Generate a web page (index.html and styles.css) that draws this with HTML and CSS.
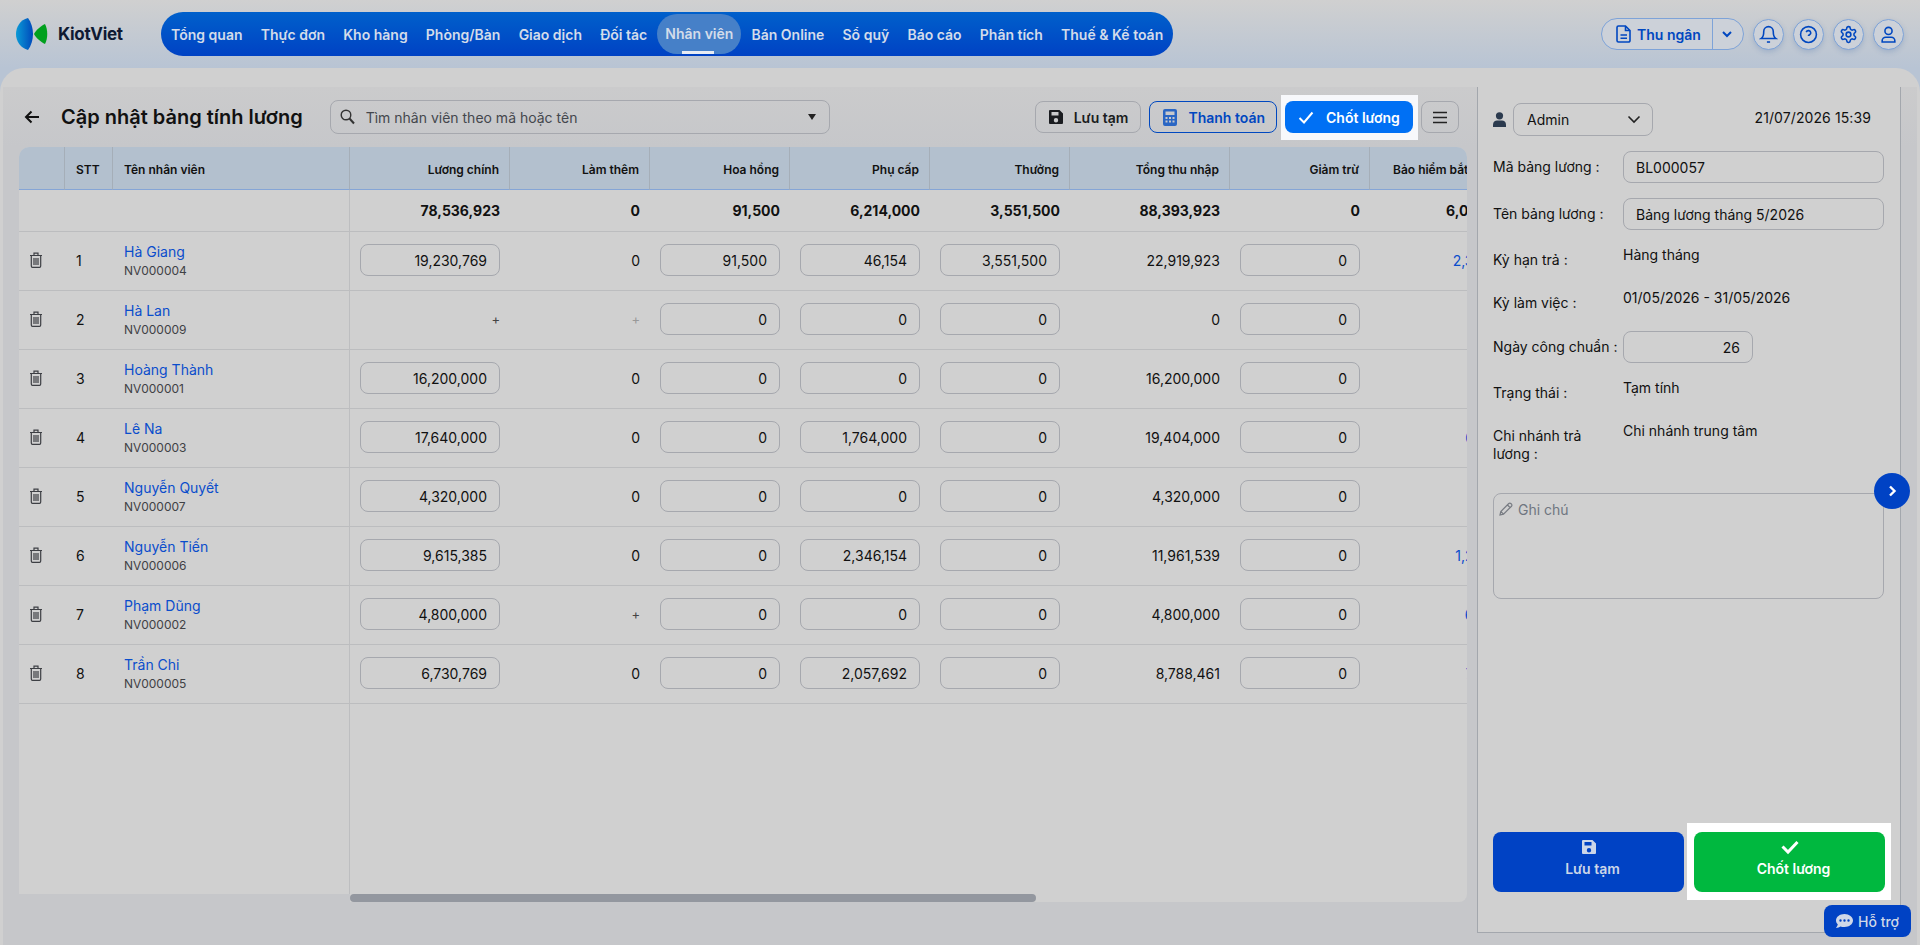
FILE: index.html
```html
<!DOCTYPE html>
<html lang="vi">
<head>
    <meta charset="UTF-8">
    <meta name="viewport" content="width=device-width, initial-scale=1.0">
    <title>Cập nhật bảng tính lương</title>
    <link rel="stylesheet" href="styles.css">
</head>
<body>
    <svg class="sprite" width="0" height="0">
        <symbol id="trash" viewBox="0 0 14 16">
            <path d="M1 3.5h12M5 3.5V1.2h4v2.3M2.3 3.5v10.6c0 .8.5 1.3 1.2 1.3h7c.7 0 1.2-.5 1.2-1.3V3.5M5 6v7M7 6v7M9 6v7" fill="none" stroke="#3d3f44" stroke-width="1.2"/>
        </symbol>
        <symbol id="floppy" viewBox="0 0 16 16">
            <path d="M2 1h9.5L15 4.5V14a1 1 0 0 1-1 1H2a1 1 0 0 1-1-1V2a1 1 0 0 1 1-1zm1.5 2v3.5h7V3zM8 9a2.2 2.2 0 1 0 0 4.4A2.2 2.2 0 0 0 8 9z" fill="currentColor" fill-rule="evenodd"/>
        </symbol>
    </svg>

    <header class="topbar">
        <div class="logo">
            <svg width="32" height="32" viewBox="0 0 32 32">
                <defs>
                    <linearGradient id="logoblue" x1="0" x2="1" y1="0" y2="0">
                        <stop offset="0" stop-color="#0a9ad6"/>
                        <stop offset="1" stop-color="#0049bb"/>
                    </linearGradient>
                </defs>
                <path d="M12 0C4 2 0 9 0 16c0 8 5 14 12 16 3-4 5-10 5-16S15 4 12 0z" fill="url(#logoblue)"/>
                <path d="M18 16c2-4 7-8 11-10 3 6 3 14 0 20-4-2-9-6-11-10z" fill="#00a01e"/>
            </svg>
            <span class="logo_text">KiotViet</span>
        </div>
        <nav class="menu">
            <a>Tổng quan</a>
            <a>Thực đơn</a>
            <a>Kho hàng</a>
            <a>Phòng/Bàn</a>
            <a>Giao dịch</a>
            <a>Đối tác</a>
            <a class="active">Nhân viên</a>
            <a>Bán Online</a>
            <a>Sổ quỹ</a>
            <a>Báo cáo</a>
            <a>Phân tích</a>
            <a>Thuế &amp; Kế toán</a>
        </nav>
        <div class="tools">
            <div class="cashier">
                <span class="cashier_main">
                    <svg width="16" height="18" viewBox="0 0 16 18" fill="none" stroke="currentColor" stroke-width="1.6"><path d="M2.5 1h7L14 5.5V15.5a1.5 1.5 0 0 1-1.5 1.5h-10A1.5 1.5 0 0 1 1 15.5v-13A1.5 1.5 0 0 1 2.5 1zM9.5 1v4.5H14M4.5 10h6.5M4.5 13.2h6.5"/></svg>
                    Thu ngân
                </span>
                <span class="cashier_arrow">
                    <svg width="12" height="8" viewBox="0 0 12 8" fill="none" stroke="currentColor" stroke-width="2"><path d="M2 2l4 4 4-4"/></svg>
                </span>
            </div>
            <span class="round_btn">
                <svg width="19" height="19" viewBox="0 0 24 24" fill="none" stroke="currentColor" stroke-width="2"><path d="M6 8a6 6 0 0 1 12 0c0 7 3 9 3 9H3s3-2 3-9"/><path d="M10 21.5h4"/></svg>
            </span>
            <span class="round_btn">
                <svg width="19" height="19" viewBox="0 0 24 24" fill="none" stroke="currentColor" stroke-width="2"><circle cx="12" cy="12" r="10"/><path d="M9.1 9a3 3 0 0 1 5.8 1c0 2-3 2.5-3 4"/><path d="M12 17.5h.01"/></svg>
            </span>
            <span class="round_btn">
                <svg width="19" height="19" viewBox="0 0 24 24" fill="none" stroke="currentColor" stroke-width="2"><path d="M12.22 2h-.44a2 2 0 0 0-2 2v.18a2 2 0 0 1-1 1.73l-.43.25a2 2 0 0 1-2 0l-.15-.08a2 2 0 0 0-2.73.73l-.22.38a2 2 0 0 0 .73 2.73l.15.1a2 2 0 0 1 1 1.72v.51a2 2 0 0 1-1 1.74l-.15.09a2 2 0 0 0-.73 2.73l.22.38a2 2 0 0 0 2.73.73l.15-.08a2 2 0 0 1 2 0l.43.25a2 2 0 0 1 1 1.73V20a2 2 0 0 0 2 2h.44a2 2 0 0 0 2-2v-.18a2 2 0 0 1 1-1.73l.43-.25a2 2 0 0 1 2 0l.15.08a2 2 0 0 0 2.73-.73l.22-.39a2 2 0 0 0-.73-2.73l-.15-.08a2 2 0 0 1-1-1.74v-.5a2 2 0 0 1 1-1.74l.15-.09a2 2 0 0 0 .73-2.73l-.22-.38a2 2 0 0 0-2.73-.73l-.15.08a2 2 0 0 1-2 0l-.43-.25a2 2 0 0 1-1-1.73V4a2 2 0 0 0-2-2z"/><circle cx="12" cy="12" r="3"/></svg>
            </span>
            <span class="round_btn">
                <svg width="19" height="19" viewBox="0 0 24 24" fill="none" stroke="currentColor" stroke-width="2"><circle cx="12" cy="7.5" r="4.5"/><path d="M4 21.5v-1.5a4.5 4.5 0 0 1 4.5-4.5h7a4.5 4.5 0 0 1 4.5 4.5v1.5z"/></svg>
            </span>
        </div>
    </header>

    <main class="panel">
        <div class="panel_inner">
            <section class="left">
                <div class="title_row">
                    <svg class="back" width="15" height="14" viewBox="0 0 15 14" fill="none" stroke="#111" stroke-width="2"><path d="M15 7H2M7.5 1.5L2 7l5.500 5.500"/></svg>
                    <h1>Cập nhật bảng tính lương</h1>
                    <div class="search">
                        <svg width="15" height="16" viewBox="0 0 15 16" fill="none" stroke="#333" stroke-width="1.4"><circle cx="6" cy="6" r="4.8"/><path d="M9.5 9.5l4.5 5" stroke-width="2"/></svg>
                        <span class="search_text">Tìm nhân viên theo mã hoặc tên</span>
                        <span class="search_caret"></span>
                    </div>
                    <div class="actions">
                        <button class="btn"><svg width="16" height="16"><use href="#floppy"/></svg>Lưu tạm</button>
                        <button class="btn btn_outline">
                            <svg width="14" height="17" viewBox="0 0 14 17"><path d="M2 0h10a2 2 0 0 1 2 2v13a2 2 0 0 1-2 2H2a2 2 0 0 1-2-2V2a2 2 0 0 1 2-2zm.5 2.500v3.500h9V2.500zM2.500 8v2h2V8zm3.500 0v2h2V8zm3.500 0v2h2V8zm-7 3.500v2h2v-2zm3.500 0v2h2v-2zm3.500 0v2h2v-2z" fill="#2a66c4" fill-rule="evenodd"/></svg>
                            Thanh toán
                        </button>
                        <div class="spot">
                            <button class="btn btn_primary">
                                <svg width="16" height="13" viewBox="0 0 16 13" fill="none" stroke="#fff" stroke-width="2"><path d="M1.500 7l4.500 4.500 8.500-10"/></svg>
                                Chốt lương
                            </button>
                        </div>
                        <button class="btn btn_icon">
                            <svg width="16" height="13" viewBox="0 0 16 13" fill="none" stroke="#222" stroke-width="1.7"><path d="M1 1.500h14M1 6.500h14M1 11.500h14"/></svg>
                        </button>
                    </div>
                </div>

                <div class="table_wrap">
                    <table class="grid">
                        <colgroup>
                            <col class="w46"><col class="w48"><col class="w237">
                            <col class="w160"><col class="w140"><col class="w140"><col class="w140"><col class="w140">
                            <col class="w160"><col class="w140"><col class="w156">
                        </colgroup>
                        <thead>
                            <tr>
                                <th></th>
                                <th class="left_text">STT</th>
                                <th class="left_text frozen">Tên nhân viên</th>
                                <th>Lương chính</th>
                                <th>Làm thêm</th>
                                <th>Hoa hồng</th>
                                <th>Phụ cấp</th>
                                <th>Thưởng</th>
                                <th>Tổng thu nhập</th>
                                <th>Giảm trừ</th>
                                <th class="last">Bảo hiểm bắt buộc</th>
                            </tr>
                        </thead>
                        <tbody>
                            <tr class="total">
                                <td></td><td></td><td class="frozen"></td>
                                <td>78,536,923</td><td>0</td><td>91,500</td><td>6,214,000</td><td>3,551,500</td><td>88,393,923</td><td>0</td><td>6,014,000</td>
                            </tr>
                            <tr>
                                <td class="del"><svg width="14" height="16"><use href="#trash"/></svg></td>
                                <td class="stt">1</td>
                                <td class="frozen"><a class="name">Hà Giang</a><span class="code">NV000004</span></td>
                                <td><input class="num" value="19,230,769"></td><td>0</td>
                                <td><input class="num" value="91,500"></td><td><input class="num" value="46,154"></td><td><input class="num" value="3,551,500"></td>
                                <td>22,919,923</td><td><input class="num" value="0"></td><td class="link">2,300,000</td>
                            </tr>
                            <tr>
                                <td class="del"><svg width="14" height="16"><use href="#trash"/></svg></td>
                                <td class="stt">2</td>
                                <td class="frozen"><a class="name">Hà Lan</a><span class="code">NV000009</span></td>
                                <td class="plus">+</td><td class="plus muted">+</td>
                                <td><input class="num" value="0"></td><td><input class="num" value="0"></td><td><input class="num" value="0"></td>
                                <td>0</td><td><input class="num" value="0"></td><td class="link">0</td>
                            </tr>
                            <tr>
                                <td class="del"><svg width="14" height="16"><use href="#trash"/></svg></td>
                                <td class="stt">3</td>
                                <td class="frozen"><a class="name">Hoàng Thành</a><span class="code">NV000001</span></td>
                                <td><input class="num" value="16,200,000"></td><td>0</td>
                                <td><input class="num" value="0"></td><td><input class="num" value="0"></td><td><input class="num" value="0"></td>
                                <td>16,200,000</td><td><input class="num" value="0"></td><td class="link">0</td>
                            </tr>
                            <tr>
                                <td class="del"><svg width="14" height="16"><use href="#trash"/></svg></td>
                                <td class="stt">4</td>
                                <td class="frozen"><a class="name">Lê Na</a><span class="code">NV000003</span></td>
                                <td><input class="num" value="17,640,000"></td><td>0</td>
                                <td><input class="num" value="0"></td><td><input class="num" value="1,764,000"></td><td><input class="num" value="0"></td>
                                <td>19,404,000</td><td><input class="num" value="0"></td><td class="link">650,000</td>
                            </tr>
                            <tr>
                                <td class="del"><svg width="14" height="16"><use href="#trash"/></svg></td>
                                <td class="stt">5</td>
                                <td class="frozen"><a class="name">Nguyễn Quyết</a><span class="code">NV000007</span></td>
                                <td><input class="num" value="4,320,000"></td><td>0</td>
                                <td><input class="num" value="0"></td><td><input class="num" value="0"></td><td><input class="num" value="0"></td>
                                <td>4,320,000</td><td><input class="num" value="0"></td><td class="link">0</td>
                            </tr>
                            <tr>
                                <td class="del"><svg width="14" height="16"><use href="#trash"/></svg></td>
                                <td class="stt">6</td>
                                <td class="frozen"><a class="name">Nguyễn Tiến</a><span class="code">NV000006</span></td>
                                <td><input class="num" value="9,615,385"></td><td>0</td>
                                <td><input class="num" value="0"></td><td><input class="num" value="2,346,154"></td><td><input class="num" value="0"></td>
                                <td>11,961,539</td><td><input class="num" value="0"></td><td class="link">1,200,000</td>
                            </tr>
                            <tr>
                                <td class="del"><svg width="14" height="16"><use href="#trash"/></svg></td>
                                <td class="stt">7</td>
                                <td class="frozen"><a class="name">Phạm Dũng</a><span class="code">NV000002</span></td>
                                <td><input class="num" value="4,800,000"></td><td class="plus">+</td>
                                <td><input class="num" value="0"></td><td><input class="num" value="0"></td><td><input class="num" value="0"></td>
                                <td>4,800,000</td><td><input class="num" value="0"></td><td class="link">600,000</td>
                            </tr>
                            <tr>
                                <td class="del"><svg width="14" height="16"><use href="#trash"/></svg></td>
                                <td class="stt">8</td>
                                <td class="frozen"><a class="name">Trần Chi</a><span class="code">NV000005</span></td>
                                <td><input class="num" value="6,730,769"></td><td>0</td>
                                <td><input class="num" value="0"></td><td><input class="num" value="2,057,692"></td><td><input class="num" value="0"></td>
                                <td>8,788,461</td><td><input class="num" value="0"></td><td class="link">700,000</td>
                            </tr>
                        </tbody>
                    </table>
                </div>
                <div class="scroll_track"><div class="scroll_thumb"></div></div>
            </section>

            <aside class="side">
                <div class="side_head">
                    <svg width="13" height="15" viewBox="0 0 13 15" fill="#2b3a4e"><circle cx="6.500" cy="3.800" r="3.600"/><path d="M0 15v-2.500C0 10 2 8.500 4 8.500h5c2 0 4 1.500 4 4V15z"/></svg>
                    <div class="user_select">Admin
                        <svg width="14" height="9" viewBox="0 0 14 9" fill="none" stroke="#222" stroke-width="1.600"><path d="M1.500 1.500L7 7l5.500-5.500"/></svg>
                    </div>
                    <span class="date">21/07/2026 15:39</span>
                </div>

                <div class="form">
                    <label>Mã bảng lương :</label>
                    <input class="field" value="BL000057">
                    <label>Tên bảng lương :</label>
                    <input class="field" value="Bảng lương tháng 5/2026">
                    <label class="top">Kỳ hạn trả :</label>
                    <span class="value">Hàng tháng</span>
                    <label class="top">Kỳ làm việc :</label>
                    <span class="value">01/05/2026 - 31/05/2026</span>
                    <label>Ngày công chuẩn :</label>
                    <input class="field field_short" value="26">
                    <label class="top">Trạng thái :</label>
                    <span class="value">Tạm tính</span>
                    <label class="top">Chi nhánh trả lương :</label>
                    <span class="value">Chi nhánh trung tâm</span>
                </div>

                <div class="note">
                    <svg width="14" height="14" viewBox="0 0 14 14" fill="none" stroke="#777b82" stroke-width="1.200"><path d="M1 13l.8-3.500L9.800 1.500a1.400 1.400 0 0 1 2 0l.7.700a1.400 1.400 0 0 1 0 2L4.500 12.200zM8.500 3l2.500 2.500M1.800 9.500l2.700 2.700"/></svg>
                    Ghi chú
                </div>

                <span class="collapse">
                    <svg width="9" height="12" viewBox="0 0 9 12" fill="none" stroke="#fff" stroke-width="2.400"><path d="M2 1.500L6.500 6 2 10.500"/></svg>
                </span>

                <div class="side_btns">
                    <button class="big_btn big_blue">
                        <svg width="16" height="16"><use href="#floppy"/></svg>
                        <span class="big_text">Lưu tạm</span>
                    </button>
                    <div class="spot_big">
                        <button class="big_btn big_green">
                            <svg width="18" height="16" viewBox="0 0 18 16" fill="none" stroke="#fff" stroke-width="3"><path d="M1.500 7.500L7 13 16.500 3"/></svg>
                            <span class="big_text">Chốt lương</span>
                        </button>
                    </div>
                </div>
            </aside>
        </div>
    </main>

    <button class="support">
        <svg width="17" height="15" viewBox="0 0 17 15"><path d="M8.500 0C3.800 0 0 2.900 0 6.500c0 1.500.7 2.900 1.800 4C1.400 12 .5 13.300 0 14c1.800 0 3.400-.8 4.400-1.500 1.200.4 2.600.6 4.100.6 4.700 0 8.500-2.900 8.500-6.500S13.200 0 8.500 0zM4.500 5.300a1.200 1.200 0 1 1 0 2.400 1.200 1.200 0 0 1 0-2.400zm4 0a1.200 1.200 0 1 1 0 2.400 1.200 1.200 0 0 1 0-2.400zm4 0a1.200 1.200 0 1 1 0 2.400 1.200 1.200 0 0 1 0-2.400z" fill="#cfd8e8" fill-rule="evenodd"/></svg>
        Hỗ trợ
    </button>
</body>
</html>
```

FILE: styles.css
```css
* {
    margin: 0;
    padding: 0;
    box-sizing: border-box;
}
body {
    width: 1920px;
    height: 945px;
    overflow: hidden;
    background: linear-gradient(#d0d0d0 0, #b8c4d4 68px, #b8c4d4 100%);
    font-family: Inter, "Noto Sans", sans-serif;
    font-size: 14px;
    color: #111;
    display: flex;
    flex-direction: column;
}
.sprite {
    position: absolute;
}
input, button {
    font-family: inherit;
    font-size: 14px;
}

/* Top bar */
.topbar {
    height: 68px;
    flex: none;
    display: flex;
    align-items: center;
    padding: 0 16px;
}
.logo {
    width: 145px;
    display: flex;
    align-items: center;
    gap: 10px;
}
.logo_text {
    font-size: 17px;
    font-weight: 700;
    color: #0f1a33;
    letter-spacing: -0.3px;
}
.menu {
    height: 44px;
    display: flex;
    align-items: center;
    padding: 0 1px;
    border-radius: 22px;
    background: linear-gradient(#0060cb, #0042c4);
}
.menu a {
    padding: 0 9.1px;
    font-weight: 600;
    color: #d3dcea;
    white-space: nowrap;
}
.menu a.active {
    position: relative;
    height: 40px;
    line-height: 40px;
    padding: 0 8px;
    margin: 0 1px;
    border-radius: 20px;
    background: #4680c8;
}
.menu a.active::after {
    content: "";
    position: absolute;
    left: 25px;
    bottom: 0;
    width: 32px;
    height: 3px;
    background: #e8ecf3;
}
.tools {
    margin-left: auto;
    display: flex;
    align-items: center;
    gap: 9px;
}
.cashier {
    width: 143px;
    height: 32px;
    display: flex;
    border: 1px solid #7ea3d8;
    border-radius: 16px;
    background: #ccd1d9;
    color: #0047c0;
    font-weight: 600;
}
.cashier_main {
    width: 111px;
    display: flex;
    align-items: center;
    gap: 5px;
    padding-left: 14px;
    border-right: 1px solid #7ea3d8;
}
.cashier_arrow {
    flex: 1;
    display: flex;
    align-items: center;
    justify-content: center;
    padding-right: 2px;
}
.round_btn {
    width: 31px;
    height: 31px;
    display: flex;
    align-items: center;
    justify-content: center;
    border: 1px solid #7ea3d8;
    border-radius: 50%;
    background: #ccd1d9;
    color: #0047c0;
    box-shadow: 0 2px 5px rgba(70, 110, 170, .25);
}

/* Main panel */
.panel {
    flex: 1;
    display: flex;
    padding: 19px 3px 0;
    border-radius: 24px 24px 0 0;
    background: #d0d0d0;
    min-height: 0;
}
.panel_inner {
    flex: 1;
    display: flex;
    gap: 10px;
    padding: 0 16px 12px 16px;
    background: linear-gradient(#cbcbcc, #c6c7ca 60px);
}
.left {
    width: 1448px;
    flex: none;
    display: flex;
    flex-direction: column;
    padding-bottom: 31px;
}
.title_row {
    height: 60px;
    flex: none;
    display: flex;
    align-items: center;
    padding-right: 8px;
}
.back {
    margin-left: 5px;
}
h1 {
    margin-left: 22px;
    font-size: 20px;
    font-weight: 600;
    white-space: nowrap;
}
.search {
    width: 500px;
    height: 34px;
    margin-left: 27px;
    display: flex;
    align-items: center;
    padding: 0 13px 0 9px;
    border: 1px solid #a6a8ae;
    border-radius: 8px;
}
.search_text {
    margin-left: 11px;
    color: #44474d;
}
.search_caret {
    margin-left: auto;
    border-left: 4px solid transparent;
    border-right: 4px solid transparent;
    border-top: 6px solid #222;
}
.actions {
    margin-left: auto;
    display: flex;
    gap: 8px;
}
.btn {
    height: 32px;
    display: flex;
    align-items: center;
    gap: 10px;
    padding: 0 12px;
    border: 1px solid #a6a8ae;
    border-radius: 8px;
    background: transparent;
    color: #1a1c20;
    font-weight: 600;
}
.btn_outline {
    border-color: #0048c0;
    color: #0047c0;
    padding: 0 11px 0 13px;
    gap: 11px;
}
.spot {
    padding: 6px 5px 7px 4px;
    margin: -6px -5px -7px -4px;
    background: #f7f8fb;
}
.btn_primary {
    width: 128px;
    border: none;
    padding-left: 13px;
    gap: 12px;
    background: #0070f4;
    color: #fff;
}
.btn_icon {
    width: 38px;
    padding: 0;
    justify-content: center;
}

/* Table */
.table_wrap {
    flex: 1;
    overflow: hidden;
    border-radius: 10px 10px 0 0;
    background: #d0d0d0 linear-gradient(#bdbec0, #bdbec0) 330px 0 / 1px 100% no-repeat;
    min-height: 0;
}
.grid {
    width: 1507px;
    table-layout: fixed;
    border-collapse: separate;
    border-spacing: 0;
}
.w46 { width: 46px; }
.w48 { width: 48px; }
.w237 { width: 237px; }
.w140 { width: 140px; }
.w156 { width: 156px; }
.w160 { width: 160px; }
.grid th {
    height: 43px;
    padding: 3px 10px 0;
    background: #b3c0ce;
    border-bottom: 1px solid #85a5d6;
    border-right: 1px solid #a5aeb8;
    font-size: 12px;
    font-weight: 600;
    text-align: right;
    white-space: nowrap;
    overflow: hidden;
}
.grid th.left_text {
    text-align: left;
    padding-left: 11px;
}
.grid th.last {
    text-align: left;
    padding-left: 23px;
    padding-right: 0;
}
.grid td {
    height: 59px;
    padding: 0 10px 2px;
    border-bottom: 1px solid #bcbdbf;
    text-align: right;
    white-space: nowrap;
}
.grid .total td {
    height: 42px;
    padding-bottom: 0;
    font-weight: 700;
}
.grid td.frozen,
.grid th.frozen {
    border-right: 1px solid #bdbec0;
    text-align: left;
    padding-left: 11px;
}
.grid th.frozen {
    border-right-color: #a5aeb8;
}
.grid td.del {
    text-align: left;
    padding: 0 0 2px 10px;
}
.del svg {
    display: block;
}
.grid td.stt {
    text-align: left;
    padding-left: 11px;
}
.name {
    display: block;
    line-height: 19px;
    color: #0a4dcc;
}
.code {
    display: block;
    margin-top: 1px;
    line-height: 17px;
    font-size: 12px;
    color: #3f4145;
}
.num {
    width: 100%;
    height: 32px;
    padding: 0 12px;
    border: 1px solid #a6a8ae;
    border-radius: 8px;
    background: transparent;
    color: #111;
    text-align: right;
}
.plus {
    font-size: 13px;
    color: #444;
}
.plus.muted {
    color: #999;
}
.grid td.link {
    padding-right: 5px;
    color: #0a4dcc;
}
.scroll_track {
    height: 8px;
    flex: none;
    margin-left: 331px;
    border-radius: 0 0 8px 0;
    background: #d0d0d0;
}
.scroll_thumb {
    width: 686px;
    height: 8px;
    border-radius: 4px;
    background: #93979f;
}

/* Right side */
.side {
    position: relative;
    width: 424px;
    flex: none;
    display: flex;
    flex-direction: column;
    padding: 16px 15px 40px;
    border: 1px solid #a3a7ad;
    border-top: none;
    background: #d0d0d0;
}
.side_head {
    height: 32px;
    display: flex;
    align-items: center;
}
.user_select {
    width: 140px;
    height: 33px;
    margin-left: 7px;
    display: flex;
    align-items: center;
    justify-content: space-between;
    padding: 0 11px 0 13px;
    border: 1px solid #a6a8ae;
    border-radius: 8px;
}
.date {
    margin-left: auto;
    margin-right: 14px;
    letter-spacing: .1px;
    transform: translateY(-2px);
}
.form {
    width: 391px;
    margin-top: 16px;
    display: grid;
    grid-template-columns: 130px 1fr;
    grid-template-rows: 32px 32px 28px 28px 32px 28px auto;
    row-gap: 15px;
}
.form label {
    align-self: center;
    line-height: 18px;
    white-space: nowrap;
}
.form label.top {
    align-self: start;
    padding: 6px 14px 0 0;
    white-space: normal;
}
.value {
    line-height: 20px;
}
.field {
    width: 100%;
    height: 32px;
    padding: 0 12px;
    border: 1px solid #a6a8ae;
    border-radius: 8px;
    background: transparent;
    color: #111;
}
.field_short {
    width: 130px;
    text-align: right;
}
.note {
    width: 391px;
    height: 106px;
    margin-top: 30px;
    display: flex;
    align-items: flex-start;
    gap: 5px;
    padding: 6px 5px;
    border: 1px solid #a6a8ae;
    border-radius: 8px;
    color: #6f7680;
    line-height: 19px;
}
.note svg {
    margin-top: 2px;
}
.collapse {
    position: absolute;
    top: 386px;
    right: -10px;
    width: 36px;
    height: 36px;
    display: flex;
    align-items: center;
    justify-content: center;
    border-radius: 50%;
    background: #0042c4;
}
.side_btns {
    margin-top: auto;
    display: flex;
    gap: 10px;
}
.spot_big {
    padding: 9px 6px 8px 7px;
    margin: -9px -6px -8px -7px;
    background: #fff;
}
.big_btn {
    width: 191px;
    height: 60px;
    display: flex;
    flex-direction: column;
    align-items: center;
    gap: 5px;
    padding-top: 7px;
    border: none;
    border-radius: 8px;
    font-weight: 600;
}
.big_text {
    padding-left: 8px;
    line-height: 17px;
}
.big_blue {
    background: #0042c4;
    color: #ccd6e8;
}
.big_green {
    background: #00b83f;
    color: #fff;
}
.support {
    position: absolute;
    right: 9px;
    bottom: 8px;
    width: 87px;
    height: 32px;
    display: flex;
    align-items: center;
    justify-content: center;
    gap: 5px;
    border: none;
    border-radius: 8px;
    background: #0042c4;
    color: #cfd8e8;
    font-weight: 500;
}
```
